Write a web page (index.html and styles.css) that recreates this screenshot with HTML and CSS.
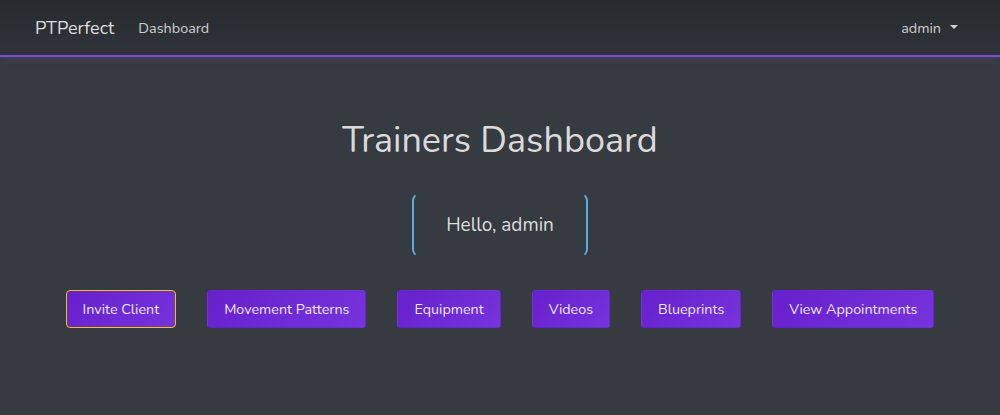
FILE: index.html
```html
<!DOCTYPE html>
<html lang="en">
<head>
<meta charset="utf-8">
<title>PTPerfect</title>
<link rel="stylesheet" href="styles.css">
</head>
<body>
<nav class="navbar">
  <div class="nav-left">
    <a class="brand" href="#">PTPerfect</a>
    <a class="nav-link" href="#">Dashboard</a>
  </div>
  <div class="nav-right">
    <a class="nav-link dropdown" href="#">admin<span class="caret"></span></a>
  </div>
</nav>
<main class="main">
  <h1 class="title">Trainers Dashboard</h1>
  <div class="hello">Hello, admin</div>
  <div class="actions">
    <button class="btn btn-active">Invite Client</button>
    <button class="btn">Movement Patterns</button>
    <button class="btn">Equipment</button>
    <button class="btn">Videos</button>
    <button class="btn">Blueprints</button>
    <button class="btn">View Appointments</button>
  </div>
</main>
</body>
</html>
```
FILE: styles.css
```css
* { box-sizing: border-box; }
html, body { margin: 0; padding: 0; }
body {
  background: #363a41;
  font-family: "Nunito", "Open Sans", sans-serif;
  color: #dcdcdc;
  height: 415px;
  overflow: hidden;
}
.navbar {
  height: 57px;
  display: flex;
  align-items: center;
  justify-content: space-between;
  padding: 0 35px;
  background: linear-gradient(to bottom, #272a2e, #30343a);
  border-bottom: 2px solid #7c50d0;
  box-shadow: 0 2px 6px rgba(124, 80, 208, 0.25);
}
.nav-left { display: flex; align-items: center; }
.brand {
  color: #dedede;
  text-decoration: none;
  font-size: 18px;
  margin-right: 24px;
}
.nav-link {
  color: #cfcfcf;
  text-decoration: none;
  font-size: 14.4px;
}
.dropdown { display: flex; align-items: center; margin-right: 7px; }
.caret {
  display: inline-block;
  margin-left: 9px;
  border-top: 4px solid #cfcfcf;
  border-left: 4px solid transparent;
  border-right: 4px solid transparent;
  margin-top: -2px;
}
.main {
  display: flex;
  flex-direction: column;
  align-items: center;
}
.title {
  font-weight: 400;
  font-size: 36px;
  margin: 63px 0 0;
  line-height: 42px;
  color: #dadada;
}
.hello {
  margin-top: 30px;
  width: 176px;
  height: 66px;
  border: 2px solid transparent;
  border-left-color: #5ea9e0;
  border-right-color: #5ea9e0;
  border-radius: 9px;
  display: flex;
  align-items: center;
  justify-content: center;
  font-size: 19px;
  color: #dcdcdc;
}
.actions {
  margin-top: 32px;
  display: flex;
  gap: 31px;
  justify-content: center;
}
.btn {
  height: 38px;
  padding: 0 16px;
  border: 1px solid transparent;
  border-radius: 4px;
  background: linear-gradient(135deg, #6620cc, #7634dd);
  color: #ece6f7;
  font-family: inherit;
  font-size: 14.3px;
  cursor: pointer;
}
.btn-active { border-color: #f2c500; }
```
